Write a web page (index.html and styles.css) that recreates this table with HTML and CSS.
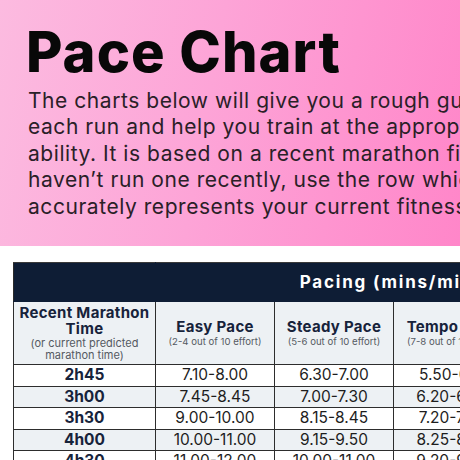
FILE: index.html
```html
<!DOCTYPE html>
<html lang="en">
<head>
<meta charset="utf-8">
<title>Pace Chart</title>
<link rel="stylesheet" href="styles.css">
</head>
<body>
<div class="page">
  <header class="hero">
    <h1 class="title">Pace Chart</h1>
    <p class="intro">
      <span class="line">The charts below will give you a rough guide to the pace for</span>
      <span class="line">each run and help you train at the appropriate level for your</span>
      <span class="line">ability. It is based on a recent marathon finish time; if you</span>
      <span class="line">haven’t run one recently, use the row which most</span>
      <span class="line">accurately represents your current fitness.</span>
    </p>
  </header>
  <section class="table-wrap">
    <table class="pace">
      <colgroup>
        <col class="c-time">
        <col class="c-pace">
        <col class="c-pace">
        <col class="c-pace">
        <col class="c-pace">
      </colgroup>
      <thead>
        <tr class="band">
          <th class="band-blank"></th>
          <th class="band-title" colspan="4">Pacing (mins/mile)</th>
        </tr>
        <tr class="heads">
          <th><span class="h-main">Recent Marathon Time</span><span class="h-sub">(or current predicted marathon time)</span></th>
          <th><span class="h-main">Easy Pace</span><span class="h-sub">(2-4 out of 10 effort)</span></th>
          <th><span class="h-main">Steady Pace</span><span class="h-sub">(5-6 out of 10 effort)</span></th>
          <th><span class="h-main">Tempo Pace</span><span class="h-sub">(7-8 out of 10 effort)</span></th>
          <th><span class="h-main">Interval Pace</span><span class="h-sub">(9 out of 10 effort)</span></th>
        </tr>
      </thead>
      <tbody>
        <tr><th>2h45</th><td>7.10-8.00</td><td>6.30-7.00</td><td>5.50-6.10</td><td>5.20-5.40</td></tr>
        <tr class="alt"><th>3h00</th><td>7.45-8.45</td><td>7.00-7.30</td><td>6.20-6.40</td><td>5.45-6.05</td></tr>
        <tr><th>3h30</th><td>9.00-10.00</td><td>8.15-8.45</td><td>7.20-7.40</td><td>6.40-7.00</td></tr>
        <tr class="alt"><th>4h00</th><td>10.00-11.00</td><td>9.15-9.50</td><td>8.25-8.45</td><td>7.35-7.55</td></tr>
        <tr><th>4h30</th><td>11.00-12.00</td><td>10.00-11.00</td><td>9.20-9.40</td><td>8.30-8.50</td></tr>
      </tbody>
    </table>
  </section>
</div>
</body>
</html>
```

FILE: styles.css
```css
html, body {
  margin: 0;
  padding: 0;
  background: #ffffff;
}

body {
  width: 460px;
  height: 460px;
  overflow: hidden;
  font-family: Inter, "Liberation Sans", sans-serif;
}

.page {
  width: 460px;
  overflow: hidden;
}

.hero {
  height: 246px;
  box-sizing: border-box;
  padding: 24px 0 0 26px;
  background: linear-gradient(100deg, #fcbbe0 0%, #fda4d7 45%, #ff86c9 100%);
}

.title {
  margin: 0;
  font-size: 56px;
  line-height: 56px;
  font-weight: 800;
  color: #080808;
  letter-spacing: 1.1px;
  white-space: nowrap;
}

.intro {
  margin: 8px 0 0 2px;
  font-size: 21px;
  line-height: 26.4px;
  font-weight: 400;
  color: #2a2027;
  letter-spacing: 0.55px;
  white-space: nowrap;
}

.line {
  display: block;
}

.table-wrap {
  padding: 16px 0 0 13px;
}

.pace {
  border-collapse: collapse;
  table-layout: fixed;
  width: 618px;
  border: 1.5px solid #2a2a2a;
}

.c-time { width: 142px; }
.c-pace { width: 119px; }

.pace th,
.pace td {
  border: 1px solid #2d2d2d;
  padding: 0;
  text-align: center;
}

.band th {
  background: #0e1d35;
  height: 38px;
  border-color: #0e1d35;
  border-top-color: #3a3a3a;
}

.band .band-blank {
  border-left-color: #2a2a2a;
}

.band-title {
  color: #ffffff;
  font-size: 17px;
  font-weight: 700;
  letter-spacing: 1.8px;
}

.heads th {
  background: #edf1f4;
  height: 62px;
  vertical-align: middle;
}

.h-main {
  display: block;
  font-size: 15px;
  line-height: 16px;
  font-weight: 700;
  color: #17233b;
  letter-spacing: 0.3px;
}

.h-sub {
  display: block;
  font-size: 9.6px;
  line-height: 11.5px;
  font-weight: 400;
  color: #555a62;
  margin-top: 1px;
}

.heads th:first-child .h-sub {
  padding: 0 14px;
  font-size: 11px;
}

tbody th,
tbody td {
  height: 20.5px;
  font-size: 15px;
  line-height: 20px;
  background: #ffffff;
}

tbody th {
  font-weight: 700;
  color: #17233b;
  font-size: 15.5px;
}

tbody td {
  font-weight: 400;
  color: #1d1d1d;
  font-size: 15.5px;
}

tbody tr.alt th,
tbody tr.alt td {
  background: #edf1f4;
}
```
